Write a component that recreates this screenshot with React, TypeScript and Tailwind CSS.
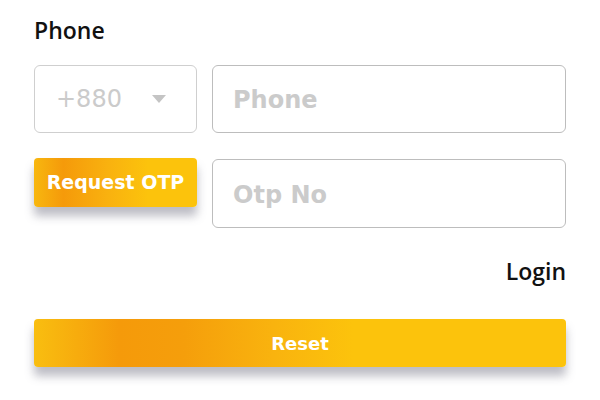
import React from 'react';

const font = { fontFamily: '"DejaVu Sans", "Noto Sans", sans-serif' };
const labelFont = { fontFamily: '"Open Sans", "Noto Sans", sans-serif' };

const App = () => {
  return (
    <div className="w-[600px] h-[400px] bg-white" style={font}>
      <div className="px-[34px] pt-[16px] flex flex-col">
        <label className="text-[23px] leading-[28px] font-semibold text-[#111]" style={labelFont}>
          Phone
        </label>

        <div className="mt-[21px] flex gap-[15px]">
          <div className="w-[163px] shrink-0 h-[68px] border border-[#cfcfcf] rounded-[6px] flex items-center pl-[21px] pr-[30px] justify-between">
            <span className="text-[24px] text-[#cbcbcb]">+880</span>
            <svg width="14" height="8" viewBox="0 0 14 8">
              <path d="M0 0 L14 0 L7 8 Z" fill="#c4c4c4" />
            </svg>
          </div>
          <input
            placeholder="Phone"
            className="flex-1 min-w-0 h-[68px] border border-[#bdbdbd] rounded-[6px] px-[20px] pt-[2px] text-[24px] font-bold placeholder:text-[#cbcbcb] outline-none"
          />
        </div>

        <div className="mt-[26px] flex gap-[15px] items-start">
          <button className="w-[163px] shrink-0 h-[49px] -mt-px rounded-[4px] text-white text-[19px] font-bold bg-[linear-gradient(90deg,#f8b70f_0%,#f59a0a_18%,#f9b10f_45%,#fcc30c_70%,#fcc30c_100%)] shadow-[0_9px_10px_rgba(90,90,110,0.4)]">
            Request OTP
          </button>
          <input
            placeholder="Otp No"
            className="flex-1 min-w-0 h-[69px] border border-[#bdbdbd] rounded-[6px] px-[20px] pt-[2px] text-[24px] font-bold placeholder:text-[#cbcbcb] outline-none"
          />
        </div>

        <div className="mt-[29px] flex justify-end">
          <span className="text-[23px] leading-[28px] font-semibold text-[#111]" style={labelFont}>
            Login
          </span>
        </div>

        <button className="mt-[34px] w-full h-[48px] rounded-[4px] text-white text-[18px] font-bold bg-[linear-gradient(90deg,#f9be10_0%,#f59a0a_16%,#f59e0b_28%,#f9b30e_45%,#fcc30c_60%,#fcc30c_100%)] shadow-[0_9px_10px_rgba(90,90,110,0.4)]">
          Reset
        </button>
      </div>
    </div>
  );
};

export default App;
